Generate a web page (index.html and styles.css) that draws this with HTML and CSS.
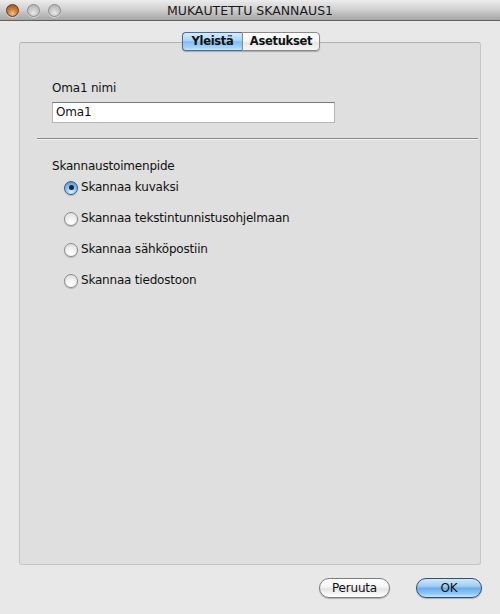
FILE: index.html
```html
<!DOCTYPE html>
<html>
<head>
<meta charset="utf-8">
<link rel="stylesheet" href="styles.css">
</head>
<body>
<div class="window">
  <div class="titlebar">
    <div class="lights">
      <span class="light close"></span>
      <span class="light"></span>
      <span class="light"></span>
    </div>
    <div class="title">MUKAUTETTU SKANNAUS1</div>
  </div>
  <div class="content">
    <div class="tabs">
      <span class="tab selected">Yleistä</span><span class="tab">Asetukset</span>
    </div>
    <div class="group">
      <div class="label">Oma1 nimi</div>
      <div class="input">Oma1</div>
      <div class="sep"></div>
      <div class="heading">Skannaustoimenpide</div>
      <div class="radios">
        <div class="radio-row"><span class="radio on"></span><span>Skannaa kuvaksi</span></div>
        <div class="radio-row"><span class="radio"></span><span>Skannaa tekstintunnistusohjelmaan</span></div>
        <div class="radio-row"><span class="radio"></span><span>Skannaa sähköpostiin</span></div>
        <div class="radio-row"><span class="radio"></span><span>Skannaa tiedostoon</span></div>
      </div>
    </div>
    <div class="buttons">
      <span class="btn">Peruuta</span>
      <span class="btn default">OK</span>
    </div>
  </div>
</div>
</body>
</html>
```

FILE: styles.css
```css
* { box-sizing: border-box; }
html, body { margin: 0; padding: 0; }
body {
  width: 500px;
  height: 614px;
  background: #e8e8e8;
  font-family: "DejaVu Sans", "Liberation Sans", sans-serif;
  font-size: 12px;
  letter-spacing: -0.2px;
  color: #111;
  overflow: hidden;
}
.window { width: 500px; height: 614px; display: flex; flex-direction: column; }
.titlebar {
  height: 21px;
  flex: none;
  background: linear-gradient(#ececec, #d2d2d2 45%, #b9b9b9 75%, #a6a6a6);
  border-bottom: 1px solid #5f5f5f;
  display: flex;
  align-items: center;
  position: relative;
}
.lights { display: flex; gap: 8px; padding-left: 6px; align-items: center; }
.light {
  width: 13px; height: 13px; border-radius: 50%;
  background: radial-gradient(circle at 50% 70%, #e8e8e8 0%, #c9c9c9 45%, #a9a9a9 100%);
  border: 1px solid #8d8d8d;
  box-shadow: 0 1px 0 rgba(255,255,255,0.5);
}
.light.close {
  background: radial-gradient(circle at 50% 78%, #f2c08a 0%, #d08443 40%, #8c4a1d 100%);
  border-color: #6d3a16;
}
.title {
  position: absolute; left: 0; right: 0; top: 0; bottom: 0;
  display: flex; align-items: center; justify-content: center;
  font-size: 12.5px; color: #1a1a1a;
  letter-spacing: 0;
}
.content {
  flex: 1;
  display: flex;
  flex-direction: column;
  padding: 11px 19px 0 19px;
}
.tabs {
  display: flex;
  justify-content: center;
  position: relative;
  z-index: 2;
  height: 19px;
  padding-left: 2px;
}
.tab {
  height: 19px;
  line-height: 17px;
  border: 1px solid #8a8a8a;
  background: linear-gradient(#ffffff, #f4f4f4 50%, #e6e6e6 55%, #f6f6f6);
  font-size: 11.5px;
  font-weight: bold;
  letter-spacing: -0.3px;
  color: #111;
  box-shadow: 0 1px 1px rgba(0,0,0,0.25);
  text-align: center;
}
.tab:first-child { border-radius: 4px 0 0 4px; border-right: none; }
.tab:last-child { border-radius: 0 4px 4px 0; width: 78px; }
.tab.selected {
  width: 60px;
  background: linear-gradient(#d5ebfc, #a9d4f7 45%, #7fbdf1 52%, #a3d3fa 85%, #c5e6ff);
  border-color: #4f6d93;
}
.group {
  margin-top: -9px;
  height: 523px;
  background: #dfdfdf;
  border: 1px solid #c6c6c6;
  border-top-color: #b3b3b3;
  border-radius: 3px;
  padding: 38px 2px 0 17px;
  display: flex;
  flex-direction: column;
}
.label { padding-left: 15px; line-height: 15px; height: 15px; }
.input {
  margin-top: 6px;
  margin-left: 15px;
  width: 283px;
  height: 21px;
  background: #fff;
  border: 1px solid #b5b5b5;
  border-top-color: #7a7a7a;
  padding-left: 3px;
  line-height: 19px;
}
.sep {
  margin-top: 15px;
  height: 1px;
  background: #8a8a8a;
  border-bottom: 1px solid #f2f2f2;
  box-sizing: content-box;
}
.heading { margin-top: 19px; padding-left: 15px; line-height: 15px; height: 15px; }
.radios { display: flex; flex-direction: column; gap: 16px; margin-top: 6px; padding-left: 27px; }
.radio-row { display: flex; align-items: center; gap: 3px; height: 15px; line-height: 15px; }
.radio {
  width: 14px; height: 14px; border-radius: 50%;
  border: 1px solid #8c8c8c;
  background: radial-gradient(circle at 50% 80%, #ffffff 0%, #f3f3f3 40%, #d6d6d6 100%);
  box-shadow: 0 1px 1px rgba(0,0,0,0.2);
  display: flex; align-items: center; justify-content: center;
  flex: none;
}
.radio.on {
  border-color: #3c5a80;
  background: radial-gradient(circle at 50% 85%, #d8f0ff 0%, #8ec6f3 45%, #4f88c4 100%);
}
.radio.on::after {
  content: "";
  width: 5px; height: 5px; border-radius: 50%;
  background: #1a2433;
}
.buttons {
  display: flex;
  justify-content: flex-end;
  gap: 26px;
  margin-top: 13px;
  margin-right: -1px;
}
.btn {
  height: 20px;
  line-height: 18px;
  border-radius: 10px;
  border: 1px solid #7c7c7c;
  background: linear-gradient(#ffffff, #f5f5f5 45%, #e4e4e4 55%, #f7f7f7 85%, #ffffff);
  box-shadow: 0 1px 1px rgba(0,0,0,0.25);
  text-align: center;
  font-size: 12px;
  color: #111;
  width: 71px;
}
.btn.default {
  width: 66px;
  border-color: #2f4e7a;
  background: linear-gradient(#cfe7fb, #9fcdf4 40%, #6eaee8 52%, #8cc6f5 80%, #c6e6ff);
}
```
